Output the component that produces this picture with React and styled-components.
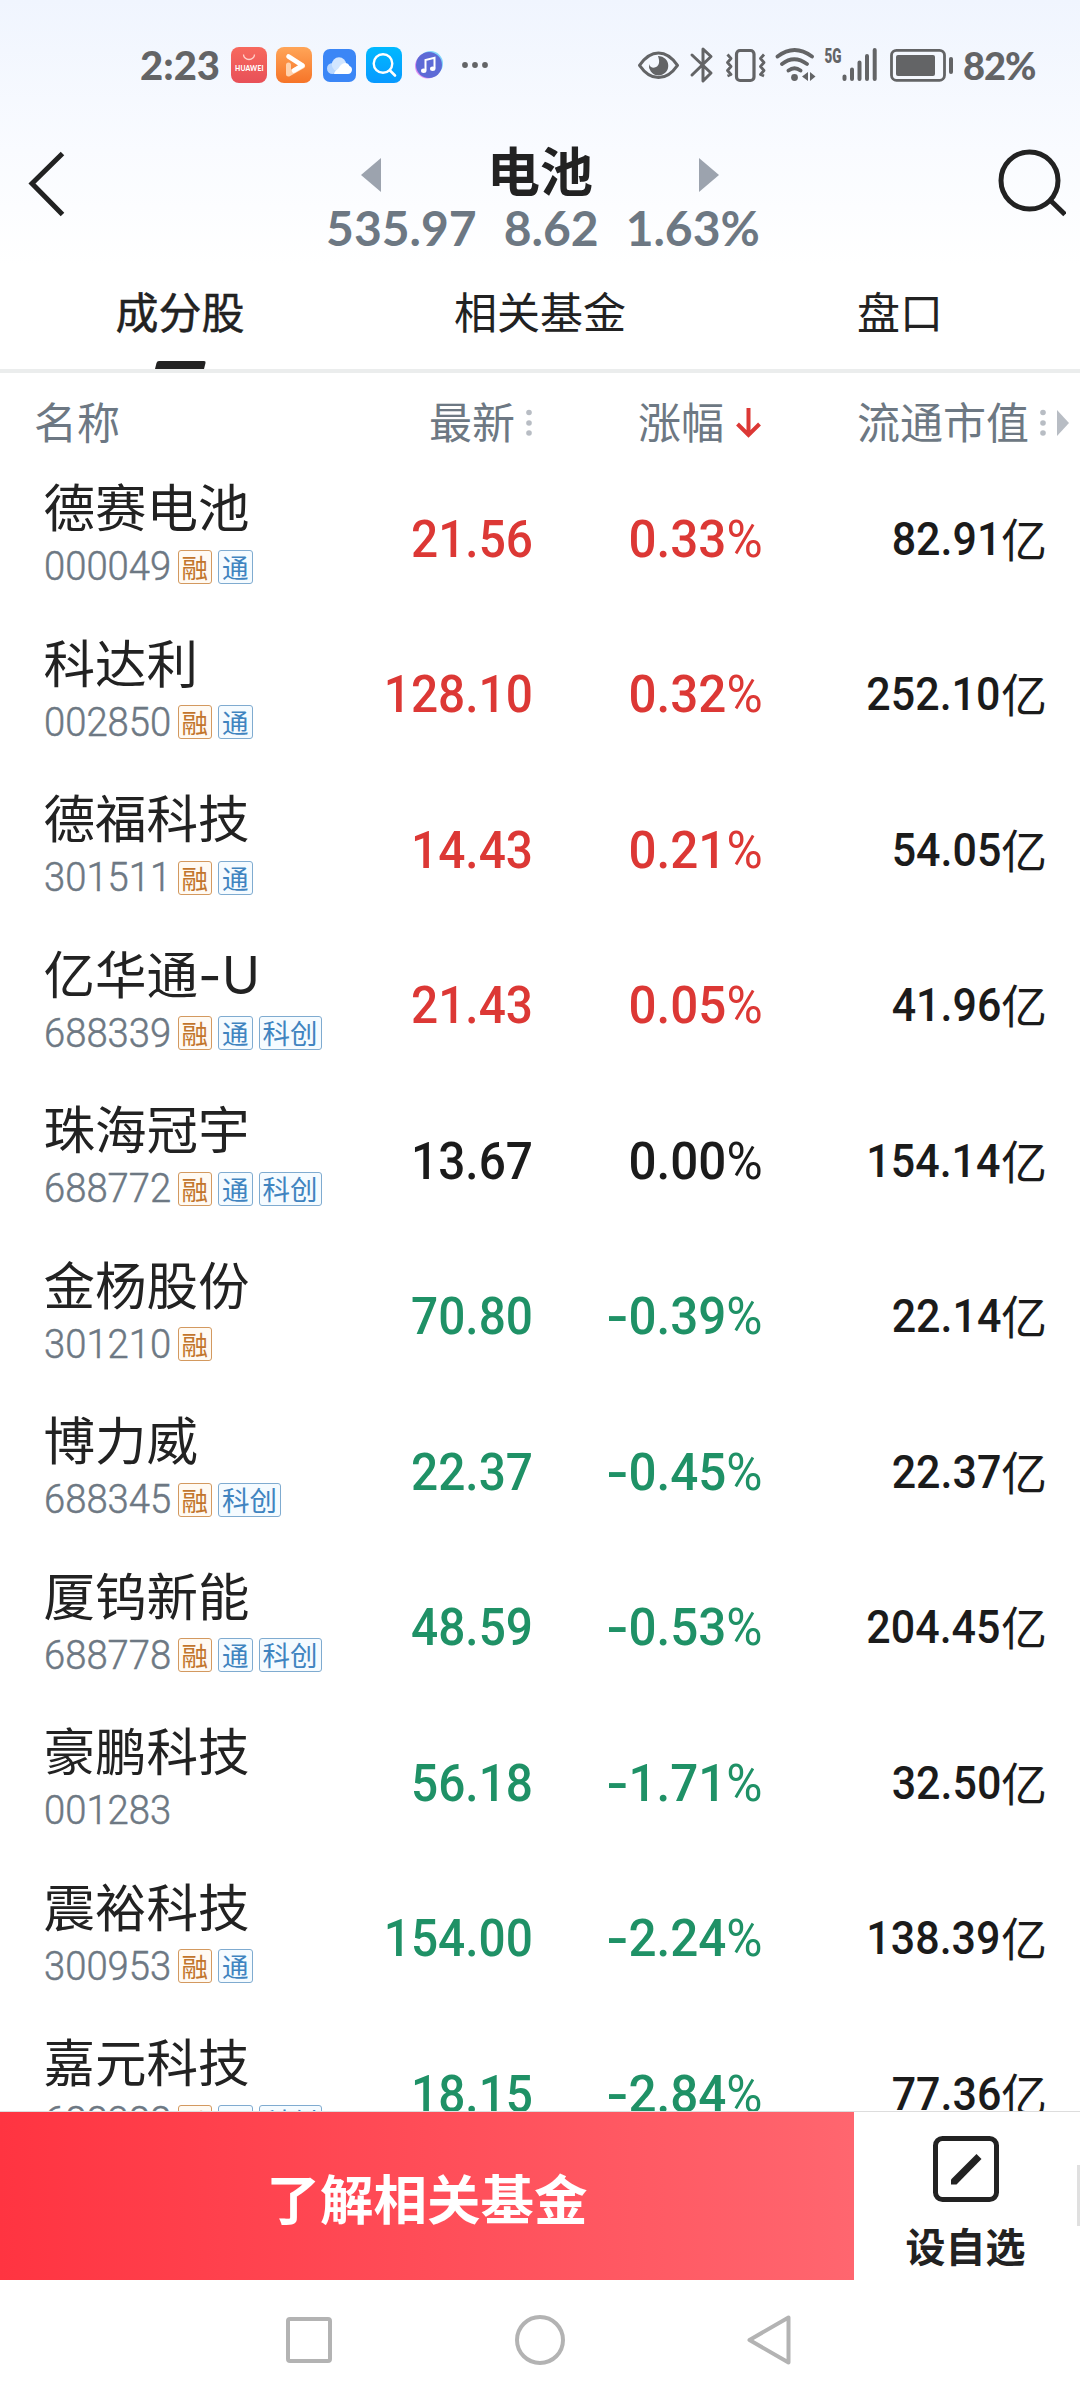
import styled, { createGlobalStyle } from "styled-components";

//  //  //  STYLED-COMPONENTS   //  //  //

const GlobalStyle = createGlobalStyle`
  * {
    box-sizing: border-box;
  }

  body {
    margin: 0;
    background: #ffffff;
    color: #222222;
    font-family: "Noto Sans CJK SC", sans-serif;
  }

  svg {
    display: block;
    flex: none;
  }
`;

const Screen = styled.div`
  width: 1080px;
  height: 2400px;
  display: flex;
  flex-direction: column;
  overflow: hidden;
  background: linear-gradient(180deg, #f0f5fe 0, #f9fbff 150px, #ffffff 265px);
`;

const StatusBar = styled.div`
  height: 130px;
  padding: 0 44px 0 140px;
  display: flex;
  align-items: center;
  justify-content: space-between;
  color: #636466;
`;

const StatusGroup = styled.div`
  display: flex;
  align-items: center;
`;

const StatusText = styled.span`
  font-family: Lato, sans-serif;
  font-weight: 900;
  font-size: ${(p) => p.$size}px;
  line-height: 44px;
  width: ${(p) => p.$width}px;
  margin-right: ${(p) => p.$after || 0}px;
  letter-spacing: ${(p) => p.$spacing || 0}px;
  white-space: nowrap;
`;

const Spaced = styled.span`
  display: block;
  margin-left: ${(p) => p.$gap}px;
`;

const Header = styled.header`
  height: 138px;
  padding: 0 14px 0 28px;
  display: grid;
  grid-template-columns: 68px 1fr 68px;
`;

const IconButton = styled.button`
  border: 0;
  padding: 18px 0 0;
  background: none;
  display: flex;
  align-items: flex-start;
  justify-content: ${(p) => p.$align};
`;

const HeaderCenter = styled.div`
  display: flex;
  flex-direction: column;
  align-items: center;
  padding-right: 14px;
`;

const TitleRow = styled.div`
  width: 358px;
  height: 75px;
  display: flex;
  align-items: flex-start;
  justify-content: space-between;

  svg {
    margin-top: 28px;
  }
`;

const Title = styled.h1`
  margin: 12px 0 0;
  font-size: 53px;
  font-weight: 700;
  line-height: 54px;
`;

const Quote = styled.div`
  display: flex;
  gap: 27px;
  padding-left: 6px;
  color: #6d7883;
  font-family: Lato, sans-serif;
  font-weight: 700;
  font-size: 48px;
  line-height: 46px;
`;

const Tabs = styled.nav`
  height: 105px;
  display: grid;
  grid-template-columns: repeat(3, 1fr);
  border-bottom: 4px solid #ebeded;
`;

const Tab = styled.div`
  display: flex;
  flex-direction: column;
  align-items: center;
  justify-content: space-between;
  padding-top: 11px;
  font-size: 43px;
  line-height: 62px;
  -webkit-text-stroke: ${(p) => (p.$active ? "0.5px #222222" : "0")};
`;

const TabMark = styled.i`
  width: 49px;
  height: 8px;
  border-radius: 2px 2px 0 0;
  background: #222222;
  transform: skewX(-14deg);
`;

const columns = `
  display: grid;
  grid-template-columns: 331px 200px 230px 284px;
`;

const TableHead = styled.div`
  ${columns}
  height: 88px;
  padding-top: 5px;
  align-items: center;
  color: #6d7883;
  font-size: 43px;
  line-height: 76px;

  svg {
    margin-top: 7px;
  }
`;

const HeadCell = styled.div`
  display: flex;
  align-items: center;
  justify-content: ${(p) => (p.$left ? "flex-start" : "flex-end")};
  gap: ${(p) => p.$gap || 0}px;
  padding-left: ${(p) => (p.$left ? 34 : 0)}px;
  margin-right: ${(p) => p.$over || 0}px;
  white-space: nowrap;
`;

const List = styled.main`
  height: 1650px;
  overflow: hidden;
`;

const Row = styled.div`
  ${columns}
  height: 155.5px;
  align-items: center;
`;

const Stock = styled.div`
  align-self: start;
  padding: 16px 0 0 43.5px;
  white-space: nowrap;
`;

const Name = styled.div`
  height: 62px;
  font-family: Inter, "Noto Sans CJK SC", sans-serif;
  font-size: 51.5px;
  line-height: 62px;
`;

const Meta = styled.div`
  display: flex;
  align-items: center;
  gap: 6px;
  height: 35px;
  margin-top: 10px;
`;

const Code = styled.span`
  width: 128px;
  color: #6d7883;
  font-family: Roboto, sans-serif;
  font-size: 40px;
  font-weight: 300;
  line-height: 35px;
  -webkit-text-stroke: 0.5px #6d7883;
  transform: scaleX(0.955);
  transform-origin: left center;
`;

const Tag = styled.span`
  width: ${(p) => (p.$wide ? 63 : 34.5)}px;
  height: 34px;
  border: 1.5px solid ${(p) => (p.$orange ? "#d3995f" : "#7fabd0")};
  border-radius: 3px;
  background: ${(p) => (p.$orange ? "#fffaf3" : "#f5fbff")};
  color: ${(p) => (p.$orange ? "#c2752c" : "#4084c0")};
  font-size: ${(p) => (p.$wide ? 27.5 : 26.5)}px;
  line-height: 31px;
  display: flex;
  justify-content: center;
`;

const Num = styled.div`
  justify-self: end;
  margin-right: -1.5px;
  color: ${(p) => p.$color};
  font-family: Roboto, sans-serif;
  font-size: 52.5px;
  font-weight: 500;
  line-height: 62px;
  white-space: nowrap;
  transform: scaleX(${(p) => p.$scale});
  transform-origin: right center;
`;

const Minus = styled.span`
  display: inline-block;
  transform: scaleX(1.3);
  transform-origin: right center;
`;

const Percent = styled.span`
  font-weight: 400;
`;

const Cap = styled.div`
  justify-self: end;
  margin-right: -2px;
  display: flex;
  align-items: center;
  color: #1b1b1b;
  font-size: 46px;
  line-height: 60px;
`;

const CapUnit = styled.span`
  margin-top: -4px;
`;

const CapValue = styled.span`
  font-family: Roboto, sans-serif;
  font-size: 46px;
  font-weight: 500;
  transform: scaleX(0.935);
  transform-origin: right center;
`;

const BottomBar = styled.div`
  height: 169px;
  display: grid;
  grid-template-columns: 854px 223px 3px;
  border-top: 1px solid #dddddd;
`;

const FundButton = styled.button`
  border: 0;
  padding: 0;
  background: linear-gradient(90deg, #ff3441 0%, #ff666f 100%);
  color: #ffffff;
  font-family: inherit;
  font-size: 53.5px;
  font-weight: 700;
`;

const WatchButton = styled.button`
  border: 0;
  padding: 24px 0 0;
  background: #ffffff;
  color: #222222;
  display: flex;
  flex-direction: column;
  align-items: center;
  gap: 14px;
  font-family: inherit;
  font-size: 40px;
  font-weight: 700;
  line-height: 58px;
`;

const EdgeHandle = styled.i`
  height: 61px;
  margin-top: 53px;
  background: #e0e0e0;
`;

const SystemNav = styled.div`
  height: 120px;
  padding: 0 284px 0 285px;
  display: flex;
  align-items: center;
  justify-content: space-between;
  background: #ffffff;
`;

//  //  //  VARIABLES   //  //  //

const RED = "#dc3835";
const GREEN = "#1f9166";
const BLACK = "#1b1b1b";

const stocks = [
  { name: "德赛电池", code: "000049", tags: ["融", "通"], price: "21.56", change: "0.33", cap: "82.91" },
  { name: "科达利", code: "002850", tags: ["融", "通"], price: "128.10", change: "0.32", cap: "252.10" },
  { name: "德福科技", code: "301511", tags: ["融", "通"], price: "14.43", change: "0.21", cap: "54.05" },
  { name: "亿华通-U", code: "688339", tags: ["融", "通", "科创"], price: "21.43", change: "0.05", cap: "41.96" },
  { name: "珠海冠宇", code: "688772", tags: ["融", "通", "科创"], price: "13.67", change: "0.00", cap: "154.14" },
  { name: "金杨股份", code: "301210", tags: ["融"], price: "70.80", change: "-0.39", cap: "22.14" },
  { name: "博力威", code: "688345", tags: ["融", "科创"], price: "22.37", change: "-0.45", cap: "22.37" },
  { name: "厦钨新能", code: "688778", tags: ["融", "通", "科创"], price: "48.59", change: "-0.53", cap: "204.45" },
  { name: "豪鹏科技", code: "001283", tags: [], price: "56.18", change: "-1.71", cap: "32.50" },
  { name: "震裕科技", code: "300953", tags: ["融", "通"], price: "154.00", change: "-2.24", cap: "138.39" },
  { name: "嘉元科技", code: "688388", tags: ["融", "通", "科创"], price: "18.15", change: "-2.84", cap: "77.36" },
];

const changeColor = (change) => {
  const n = Number(change);
  if (n > 0) return RED;
  return n < 0 ? GREEN : BLACK;
};

//  //  //  ICONS    //  //  //

const AppIcons = () => (
  <>
    <svg width="36" height="36" viewBox="0 0 36 36">
      <defs>
        <linearGradient id="store" x1="0" y1="0" x2="0" y2="1">
          <stop offset="0" stopColor="#f7695e" />
          <stop offset="1" stopColor="#e85058" />
        </linearGradient>
      </defs>
      <rect width="36" height="36" rx="8" fill="url(#store)" />
      <path d="M12.5 7.5a5.5 5 0 0 0 11 0" fill="none" stroke="#ffd3cc" strokeWidth="1.3" />
      <text x="4" y="24" textLength="28.5" fontFamily="Lato, sans-serif" fontWeight="900" fontSize="6.8" fill="#fff">
        HUAWEI
      </text>
    </svg>
    <Spaced $gap={9}>
      <svg width="36" height="36" viewBox="0 0 36 36">
        <defs>
          <linearGradient id="video" x1="0" y1="0" x2="0" y2="1">
            <stop offset="0" stopColor="#ffa558" />
            <stop offset="1" stopColor="#f67428" />
          </linearGradient>
        </defs>
        <rect width="36" height="36" rx="8" fill="url(#video)" />
        <path d="M12.5 18v9L26.5 19" fill="none" stroke="#ffd2ae" strokeWidth="5" strokeLinecap="round" strokeLinejoin="round" />
        <path d="M12.5 9.5 26.5 18.5 18 23.5" fill="none" stroke="#fff" strokeWidth="4.6" strokeLinecap="round" strokeLinejoin="round" />
      </svg>
    </Spaced>
    <Spaced $gap={11}>
      <svg width="33" height="33" viewBox="0 0 33 33">
        <rect width="33" height="33" rx="7" fill="#3b86f6" />
        <circle cx="9.5" cy="19.5" r="5.5" fill="#b9d7ff" />
        <circle cx="16" cy="15.5" r="7.2" fill="#d3e6ff" />
        <path d="M11 25c1-4 4-4 6-8 3-4 8-4 9.5 0 4 1 3 8-1.5 8z" fill="#fff" />
      </svg>
    </Spaced>
    <Spaced $gap={10}>
      <svg width="36" height="36" viewBox="0 0 36 36">
        <defs>
          <linearGradient id="find" x1="0" y1="0" x2="0" y2="1">
            <stop offset="0" stopColor="#00b9ff" />
            <stop offset="1" stopColor="#0899ff" />
          </linearGradient>
        </defs>
        <rect width="36" height="36" rx="8" fill="url(#find)" />
        <circle cx="17" cy="16.5" r="9.3" fill="none" stroke="#fff" strokeWidth="2.4" />
        <path d="m24 23.5 5 5" stroke="#fff" strokeWidth="2.6" strokeLinecap="round" />
      </svg>
    </Spaced>
    <Spaced $gap={12}>
      <svg width="30" height="30" viewBox="0 0 30 30">
        <circle cx="16.5" cy="13.5" r="12.5" fill="#7fd4fb" />
        <circle cx="13.5" cy="16" r="12.5" fill="#dc8cf2" />
        <circle cx="15" cy="15" r="13" fill="#5d6ad6" />
        <path d="M11.5 20.5V10l9-2.200v10.700" fill="none" stroke="#fff" strokeWidth="2" />
        <ellipse cx="9.7" cy="20.7" rx="2.7" ry="2.2" fill="#fff" />
        <ellipse cx="18.7" cy="18.7" rx="2.7" ry="2.2" fill="#fff" />
      </svg>
    </Spaced>
    <Spaced $gap={18}>
      <svg width="26" height="6" viewBox="0 0 26 6" fill="#636466">
        <circle cx="3" cy="3" r="2.9" />
        <circle cx="13" cy="3" r="2.9" />
        <circle cx="23" cy="3" r="2.9" />
      </svg>
    </Spaced>
  </>
);

// the whole indicator strip: eye, bluetooth, vibrate, wifi, signal, battery
const Indicators = () => (
  <svg width="316" height="40" viewBox="638 45 316 40" fill="none" stroke="#636466">
    <path d="M639.5 65.3Q648 53 658.5 53T677.5 65.3Q669 77.6 658.5 77.6T639.5 65.3Z" strokeWidth="3" strokeLinejoin="round" />
    <path d="M658 56a9.7 9.7 0 1 1-9 8c1 5 9 5 10-1 .5-3-.5-5-1-7z" fill="#636466" stroke="none" />
    <path d="m692 55 19 18-8 8V49l8 7.5-19 18.5" strokeWidth="3" strokeLinejoin="round" strokeLinecap="round" />
    <rect x="736.5" y="50.5" width="17.5" height="30" rx="3.5" strokeWidth="3.2" />
    <path d="m727.5 54.5 3.5 4-3.5 4 3.5 4-3.5 4 3.5 4-3.5 1.5M764 54.5l-3.5 4 3.5 4-3.5 4 3.5 4-3.5 4 3.5 1.5" strokeWidth="2.8" strokeLinejoin="round" />
    <path d="M777.5 56.5q17-13 34.5 0M782 64q12-9.500 25 0M788.5 70.5q6-4.500 12 0" strokeWidth="3.8" strokeLinecap="round" />
    <circle cx="794.5" cy="77.5" r="3.4" fill="#636466" stroke="none" />
    <path d="M808 72v9l-6-4.500zM810 72v9l5.5-4.500z" fill="#636466" stroke="none" />
    <text x="824.5" y="62.5" textLength="17" lengthAdjust="spacingAndGlyphs" fontFamily="Roboto, sans-serif" fontWeight="900" fontSize="20.5" fill="#636466" stroke="none">
      5G
    </text>
    <path d="M844.5 76.5v2.5M852 69.5V79M859.5 62.5V79M867 56V79M874.7 50V79" strokeWidth="4" strokeLinecap="round" />
    <rect x="891.5" y="50.3" width="53" height="30" rx="5" strokeWidth="2.8" />
    <rect x="896" y="55" width="39" height="21" rx="2" fill="#636466" stroke="none" />
    <path d="M951 59v13" strokeWidth="4" strokeLinecap="round" />
  </svg>
);

const Arrow = ({ flip }) => (
  <svg width="20" height="34" viewBox="0 0 20 34">
    <path d={flip ? "M0 0v34l20-17z" : "M20 0v34L0 17z"} fill="#9ca3ae" />
  </svg>
);

const SortDots = () => (
  <svg width="6" height="28" viewBox="0 0 6 28" fill="#b8bdc4">
    <circle cx="3" cy="3.5" r="2.8" />
    <circle cx="3" cy="14" r="2.8" />
    <circle cx="3" cy="24" r="2.8" />
  </svg>
);

//  //  //  FUNCTION    //  //  //

export default function App() {
  return (
    <Screen>
      <GlobalStyle />

      <StatusBar>
        <StatusGroup>
          <StatusText $size={40} $width={80} $after={11}>
            2:23
          </StatusText>
          <AppIcons />
        </StatusGroup>
        <StatusGroup>
          <Indicators />
          <Spaced $gap={9}>
            <StatusText as="div" $size={38} $width={73} $spacing={-1}>
              82%
            </StatusText>
          </Spaced>
        </StatusGroup>
      </StatusBar>

      <Header>
        <IconButton $align="flex-start" aria-label="返回">
          <svg width="38" height="70" viewBox="0 0 38 70">
            <path d="M34.5 5.5 4 35.5l30.5 31" fill="none" stroke="#222" strokeWidth="5" />
          </svg>
        </IconButton>
        <HeaderCenter>
          <TitleRow>
            <Arrow />
            <Title>电池</Title>
            <Arrow flip />
          </TitleRow>
          <Quote>
            <span>535.97</span>
            <span>8.62</span>
            <span>1.63%</span>
          </Quote>
        </HeaderCenter>
        <IconButton $align="flex-end" aria-label="搜索">
          <svg width="70" height="70" viewBox="0 0 70 70" fill="none" stroke="#222" strokeWidth="5">
            <circle cx="33.5" cy="32.5" r="28.5" />
            <path d="m54 52 15 14.5" />
          </svg>
        </IconButton>
      </Header>

      <Tabs>
        <Tab $active>
          成分股
          <TabMark />
        </Tab>
        <Tab>相关基金</Tab>
        <Tab>盘口</Tab>
      </Tabs>

      <TableHead>
        <HeadCell $left>名称</HeadCell>
        <HeadCell $gap={11} $over={-1}>
          最新
          <SortDots />
        </HeadCell>
        <HeadCell $gap={12}>
          涨幅
          <svg width="25" height="30" viewBox="0 0 25 30" fill="none" stroke={RED} strokeWidth="4">
            <path d="M12.5 0v27M1.5 16l11 11 11-11" />
          </svg>
        </HeadCell>
        <HeadCell $gap={11} $over={-24}>
          流通市值
          <SortDots />
          <svg width="12" height="26" viewBox="0 0 12 26">
            <path d="M0 0v26l12-13z" fill="#b8bdc4" />
          </svg>
        </HeadCell>
      </TableHead>

      <List>
        {stocks.map((s) => (
          <Row key={s.code}>
            <Stock>
              <Name>{s.name}</Name>
              <Meta>
                <Code>{s.code}</Code>
                {s.tags.map((t) => (
                  <Tag key={t} $orange={t === "融"} $wide={t.length > 1}>
                    {t}
                  </Tag>
                ))}
              </Meta>
            </Stock>
            <Num $color={changeColor(s.change)} $scale={0.91}>
              {s.price}
            </Num>
            <Num $color={changeColor(s.change)} $scale={0.94}>
              {s.change.startsWith("-") && <Minus>-</Minus>}
              {s.change.replace("-", "")}
              <Percent>%</Percent>
            </Num>
            <Cap>
              <CapValue>{s.cap}</CapValue>
              <CapUnit>亿</CapUnit>
            </Cap>
          </Row>
        ))}
      </List>

      <BottomBar>
        <FundButton>了解相关基金</FundButton>
        <WatchButton>
          <svg width="66" height="66" viewBox="0 0 66 66">
            <rect x="2.5" y="2.5" width="61" height="61" rx="7" fill="none" stroke="#222" strokeWidth="5" />
            <path d="m43.5 18 5 5-25 25.500h-5.500v-5z" fill="#222" />
          </svg>
          设自选
        </WatchButton>
        <EdgeHandle />
      </BottomBar>

      <SystemNav>
        <svg width="48" height="48" viewBox="0 0 48 48">
          <rect x="3" y="3" width="42" height="42" rx="2" fill="none" stroke="#b3b3b3" strokeWidth="4" />
        </svg>
        <svg width="50" height="50" viewBox="0 0 50 50">
          <circle cx="25" cy="25" r="23" fill="none" stroke="#b3b3b3" strokeWidth="4" />
        </svg>
        <svg width="50" height="50" viewBox="0 0 50 50">
          <path d="M42.5 2.5v45L3.5 25z" fill="none" stroke="#b3b3b3" strokeWidth="4" strokeLinejoin="round" />
        </svg>
      </SystemNav>
    </Screen>
  );
}
